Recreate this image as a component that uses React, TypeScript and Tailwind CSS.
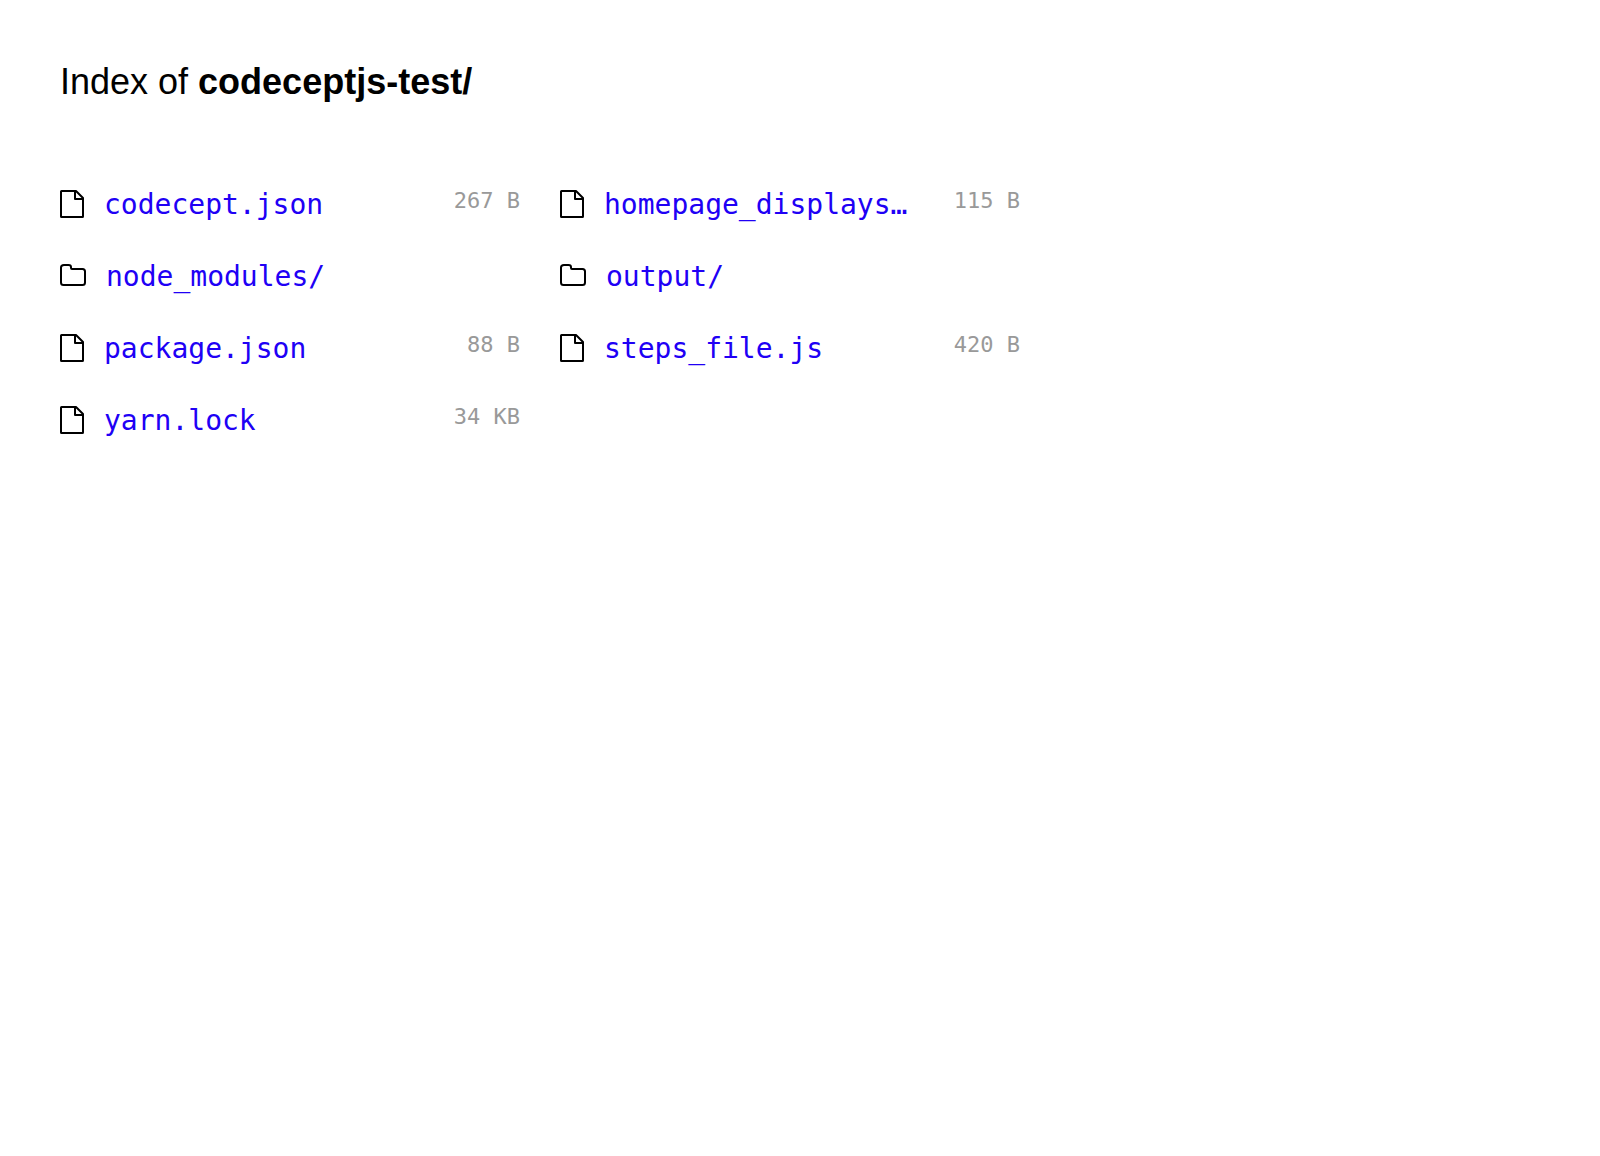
type Entry = { name: string; size?: string; folder?: boolean };

const entries: Entry[] = [
  { name: 'codecept.json', size: '267 B' },
  { name: 'homepage_displays…', size: '115 B' },
  { name: 'node_modules/', folder: true },
  { name: 'output/', folder: true },
  { name: 'package.json', size: '88 B' },
  { name: 'steps_file.js', size: '420 B' },
  { name: 'yarn.lock', size: '34 KB' },
];

function FileIcon() {
  return (
    <svg className="mr-5 h-7 w-6 shrink-0" viewBox="0 0 24 28" fill="none" stroke="#000" strokeWidth="2" strokeLinejoin="round" aria-hidden="true">
      <path d="M1.500 1H16l7 7v18.500q0 .5-.5.5h-21q-.5 0-.5-.5v-25q0-.5.5-.5z" />
      <path d="M15 1v8h8" />
    </svg>
  );
}

function FolderIcon() {
  return (
    <svg className="mr-5 h-7 w-[26px] shrink-0" viewBox="0 0 26 28" fill="none" stroke="#000" strokeWidth="2" strokeLinejoin="round" aria-hidden="true">
      <path d="M4 3H8.500Q11 3 11 5V6Q11 7 12 7H22.500Q25 7 25 9.500V20.500Q25 23 22.500 23H3.500Q1 23 1 20.500V5.500Q1 3 4 3Z" />
    </svg>
  );
}

export default function App() {
  return (
    <main className="min-h-screen bg-white p-[60px] text-black">
      <header className="mb-[62px]">
        <h1 className="font-['Liberation_Sans',sans-serif] text-[36px] leading-11">
          Index of <strong>codeceptjs-test/</strong>
        </h1>
      </header>
      <ul className="grid max-w-[1000px] grid-cols-[repeat(auto-fill,460px)] gap-x-10 font-['DejaVu_Sans_Mono',monospace]">
        {entries.map((entry) => (
          <li key={entry.name} className="flex h-[72px] items-start pt-6">
            {entry.folder ? <FolderIcon /> : <FileIcon />}
            <a href={'#' + entry.name} className="text-[28px] leading-[30px] whitespace-nowrap text-[#2000f5]">
              {entry.name}
            </a>
            <span className="ml-auto text-[22px] leading-[22px] whitespace-nowrap text-[#999]">{entry.size}</span>
          </li>
        ))}
      </ul>
    </main>
  );
}
